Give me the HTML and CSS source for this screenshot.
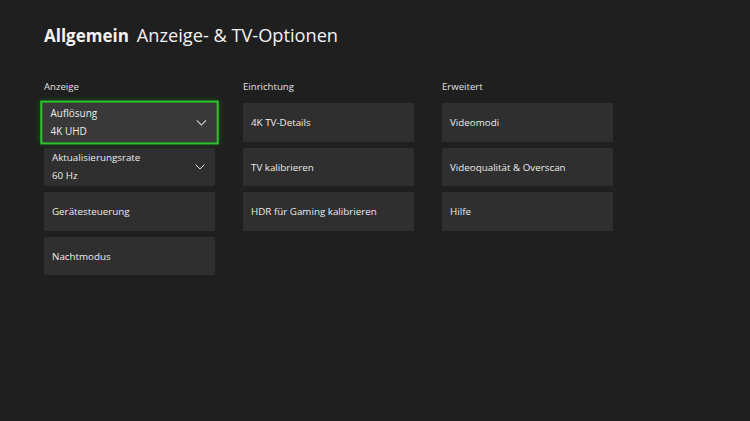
FILE: index.html
```html
<!DOCTYPE html>
<html lang="de">
  <head>
    <meta charset="UTF-8" />
    <title>Anzeige- &amp; TV-Optionen</title>
    <link rel="stylesheet" href="styles.css">
  </head>
  <body>
    <header class="page-title">
      <span class="section">Allgemein</span>
      <span class="subsection">Anzeige- &amp; TV-Optionen</span>
    </header>

    <main class="columns">
      <section class="column">
        <div class="column-title">Anzeige</div>
        <div class="tile focused">
          <div class="tile-text">
            <div>Auflösung</div>
            <div class="value">4K UHD</div>
          </div>
          <svg class="chevron" viewBox="0 0 10 6"><path d="M0.5 0.5 L5 5 L9.5 0.5" /></svg>
        </div>
        <div class="tile">
          <div class="tile-text">
            <div>Aktualisierungsrate</div>
            <div class="value">60 Hz</div>
          </div>
          <svg class="chevron" viewBox="0 0 10 6"><path d="M0.5 0.5 L5 5 L9.5 0.5" /></svg>
        </div>
        <div class="tile">Gerätesteuerung</div>
        <div class="tile">Nachtmodus</div>
      </section>

      <section class="column">
        <div class="column-title">Einrichtung</div>
        <div class="tile">4K TV-Details</div>
        <div class="tile">TV kalibrieren</div>
        <div class="tile">HDR für Gaming kalibrieren</div>
      </section>

      <section class="column">
        <div class="column-title">Erweitert</div>
        <div class="tile">Videomodi</div>
        <div class="tile">Videoqualität &amp; Overscan</div>
        <div class="tile">Hilfe</div>
      </section>
    </main>
  </body>
</html>
```

FILE: styles.css
```css
* {
  margin: 0;
  padding: 0;
  box-sizing: border-box;
}
body {
  background-color: #1f1f1f;
  color: #e8e8e8;
  font-family: "Open Sans", "Noto Sans", sans-serif;
  width: 750px;
  height: 421px;
  overflow: hidden;
  padding: 22px 0 0 44px;
}
.page-title {
  display: flex;
  align-items: baseline;
  gap: 8px;
  height: 26px;
  line-height: 26px;
  color: #f2f2f2;
}
.section {
  font-size: 17px;
  font-weight: 700;
}
.subsection {
  font-size: 18.2px;
  font-weight: 400;
}
.columns {
  display: flex;
  gap: 28px;
  margin-top: 31px;
}
.column {
  width: 171px;
  display: flex;
  flex-direction: column;
  gap: 6px;
}
.column-title {
  font-size: 9.6px;
  height: 15px;
  line-height: 15px;
  color: #e0e0e0;
  margin-bottom: 3px;
}
.tile {
  height: 38.5px;
  background-color: #2f2f2f;
  display: flex;
  align-items: center;
  justify-content: space-between;
  padding: 1px 8px 0;
  font-size: 9.8px;
  color: #ececec;
}
.tile-text {
  display: flex;
  flex-direction: column;
  gap: 4px;
  line-height: 14px;
}
.tile.focused {
  background-color: #393939;
  outline: 2px solid #2fc02f;
  box-shadow: 0 0 6px 2px rgba(20, 140, 20, 0.55);
  transform: scale(1.02);
}
.chevron {
  width: 10px;
  height: 6px;
  margin-right: 2px;
  fill: none;
  stroke: #dcdcdc;
  stroke-width: 1;
}
```
